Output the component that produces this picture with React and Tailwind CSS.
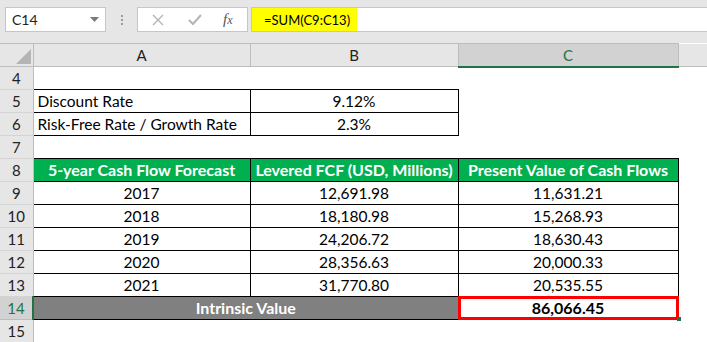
import React from "react";

const font = { fontFamily: "Lato, 'Open Sans', sans-serif" };

function RowHead({ n, active }) {
  return (
    <td
      className={
        "p-0 text-center align-middle border-r border-b text-[15px] font-normal " +
        (active
          ? "bg-[#d2d2d2] text-[#217346] border-r-2 border-r-[#217346] border-b-[#bdbdbd]"
          : "bg-[#e6e6e6] text-[#222] border-r-[#bdbdbd] border-b-[#d4d4d4]")
      }
    >
      {n}
    </td>
  );
}

export default function App() {
  const data = [
    [9, "2017", "12,691.98", "11,631.21"],
    [10, "2018", "18,180.98", "15,268.93"],
    [11, "2019", "24,206.72", "18,630.43"],
    [12, "2020", "28,356.63", "20,000.33"],
    [13, "2021", "31,770.80", "20,535.55"],
  ];
  return (
    <div className="w-[707px] h-[342px] overflow-hidden bg-white text-[15.5px] leading-[20px] text-black" style={font}>
      {/* formula bar */}
      <div className="h-[43px] bg-[#e6e6e6] flex items-start pt-[7px]">
        <div className="ml-[5px] w-[101px] h-[25px] bg-white border border-[#c6c6c6] flex items-center pl-[6px] pr-[6px] text-[#222] text-[14px]">
          <span className="flex-1">C14</span>
          <svg width="9" height="5" viewBox="0 0 9 5"><path d="M0 0h9L4.5 5z" fill="#7a7a7a" /></svg>
        </div>
        <div className="w-[31px] h-[25px] flex flex-col items-center justify-center gap-[2px]">
          <span className="w-[2px] h-[2px] bg-[#9a9a9a]" />
          <span className="w-[2px] h-[2px] bg-[#9a9a9a]" />
          <span className="w-[2px] h-[2px] bg-[#9a9a9a]" />
        </div>
        <div className="w-[111px] h-[25px] bg-white border border-[#c6c6c6] flex items-center">
          <svg className="ml-[14px]" width="12" height="12" viewBox="0 0 12 12"><path d="M1 1l10 10M11 1L1 11" stroke="#b4b4b4" strokeWidth="1.4" /></svg>
          <svg className="ml-[24px]" width="14" height="12" viewBox="0 0 14 12"><path d="M1 6l4 4 8-9" stroke="#b4b4b4" strokeWidth="2" fill="none" /></svg>
          <span className="ml-[21px] italic text-[15px] text-[#555]" style={{ fontFamily: "'Liberation Serif', serif" }}>
            f<span className="text-[12px]">x</span>
          </span>
        </div>
        <div className="ml-[3px] flex-1 h-[25px] bg-white border border-[#c6c6c6] border-r-0 flex items-center">
          <div className="h-full bg-[#ffff00] w-[105px] flex items-center pl-[12px] text-[13px]">=SUM(C9:C13)</div>
        </div>
      </div>
      {/* grid */}
      <table className="table-fixed border-collapse w-[707px]">
        <colgroup>
          <col className="w-[33px]" />
          <col className="w-[217px]" />
          <col className="w-[208px]" />
          <col className="w-[220px]" />
          <col />
        </colgroup>
        <tbody>
          <tr className="h-[23px] text-[#222] text-[15px]">
            <td className="p-0 bg-[#e6e6e6] border-r border-t border-b border-[#bdbdbd] relative">
              <svg className="absolute right-[2px] bottom-[2px]" width="15" height="15" viewBox="0 0 15 15"><path d="M15 0V15H0z" fill="#b4b4b4" /></svg>
            </td>
            <td className="p-0 bg-[#e6e6e6] border-r border-t border-b border-[#bdbdbd] text-center">A</td>
            <td className="p-0 bg-[#e6e6e6] border-r border-t border-b border-[#bdbdbd] text-center">B</td>
            <td className="p-0 bg-[#d2d2d2] border-r border-t border-[#bdbdbd] border-b-2 border-b-[#217346] text-center text-[#217346]">C</td>
            <td className="p-0 bg-[#e6e6e6] border-b border-[#bdbdbd]"></td>
          </tr>
          <tr className="h-[23px]">
            <RowHead n={4} />
            <td /><td /><td /><td />
          </tr>
          <tr className="h-[23px]">
            <RowHead n={5} />
            <td className="p-0 pl-[4px] border border-black">Discount Rate</td>
            <td className="p-0 border border-black text-center">9.12%</td>
            <td /><td />
          </tr>
          <tr className="h-[23px]">
            <RowHead n={6} />
            <td className="p-0 pl-[4px] border border-black">Risk-Free Rate / Growth Rate</td>
            <td className="p-0 border border-black text-center">2.3%</td>
            <td /><td />
          </tr>
          <tr className="h-[23px]">
            <RowHead n={7} />
            <td className="border-t border-black" /><td className="border-t border-black" /><td /><td />
          </tr>
          <tr className="h-[23px] text-white font-bold text-[16px]">
            <RowHead n={8} />
            <td className="p-0 border border-black bg-[#00b050] text-center">5-year Cash Flow Forecast</td>
            <td className="p-0 border border-black bg-[#00b050] text-center">Levered FCF (USD, Millions)</td>
            <td className="p-0 border border-black bg-[#00b050] text-center">Present Value of Cash Flows</td>
            <td />
          </tr>
          {data.map(([n, y, b, c]) => (
            <tr key={n} className="h-[23px]">
              <RowHead n={n} />
              <td className="p-0 border border-black text-center">{y}</td>
              <td className="p-0 border border-black text-center">{b}</td>
              <td className="p-0 border border-black text-center">{c}</td>
              <td />
            </tr>
          ))}
          <tr className="h-[23px] font-bold text-[16px]">
            <RowHead n={14} active />
            <td colSpan={2} className="p-0 border border-black bg-[#808080] text-white text-center">Intrinsic Value</td>
            <td className="p-0 border border-black text-center relative">
              <div className="absolute inset-[-1px] border-[3px] border-[#ff0000]" />
              <div className="absolute right-[-3px] bottom-[-2px] w-[4px] h-[4px] bg-[#217346]" />
              <span className="relative">86,066.45</span>
            </td>
            <td />
          </tr>
          <tr className="h-[23px]">
            <RowHead n={15} />
            <td className="border-t border-black" /><td className="border-t border-black" /><td /><td />
          </tr>
        </tbody>
      </table>
    </div>
  );
}
